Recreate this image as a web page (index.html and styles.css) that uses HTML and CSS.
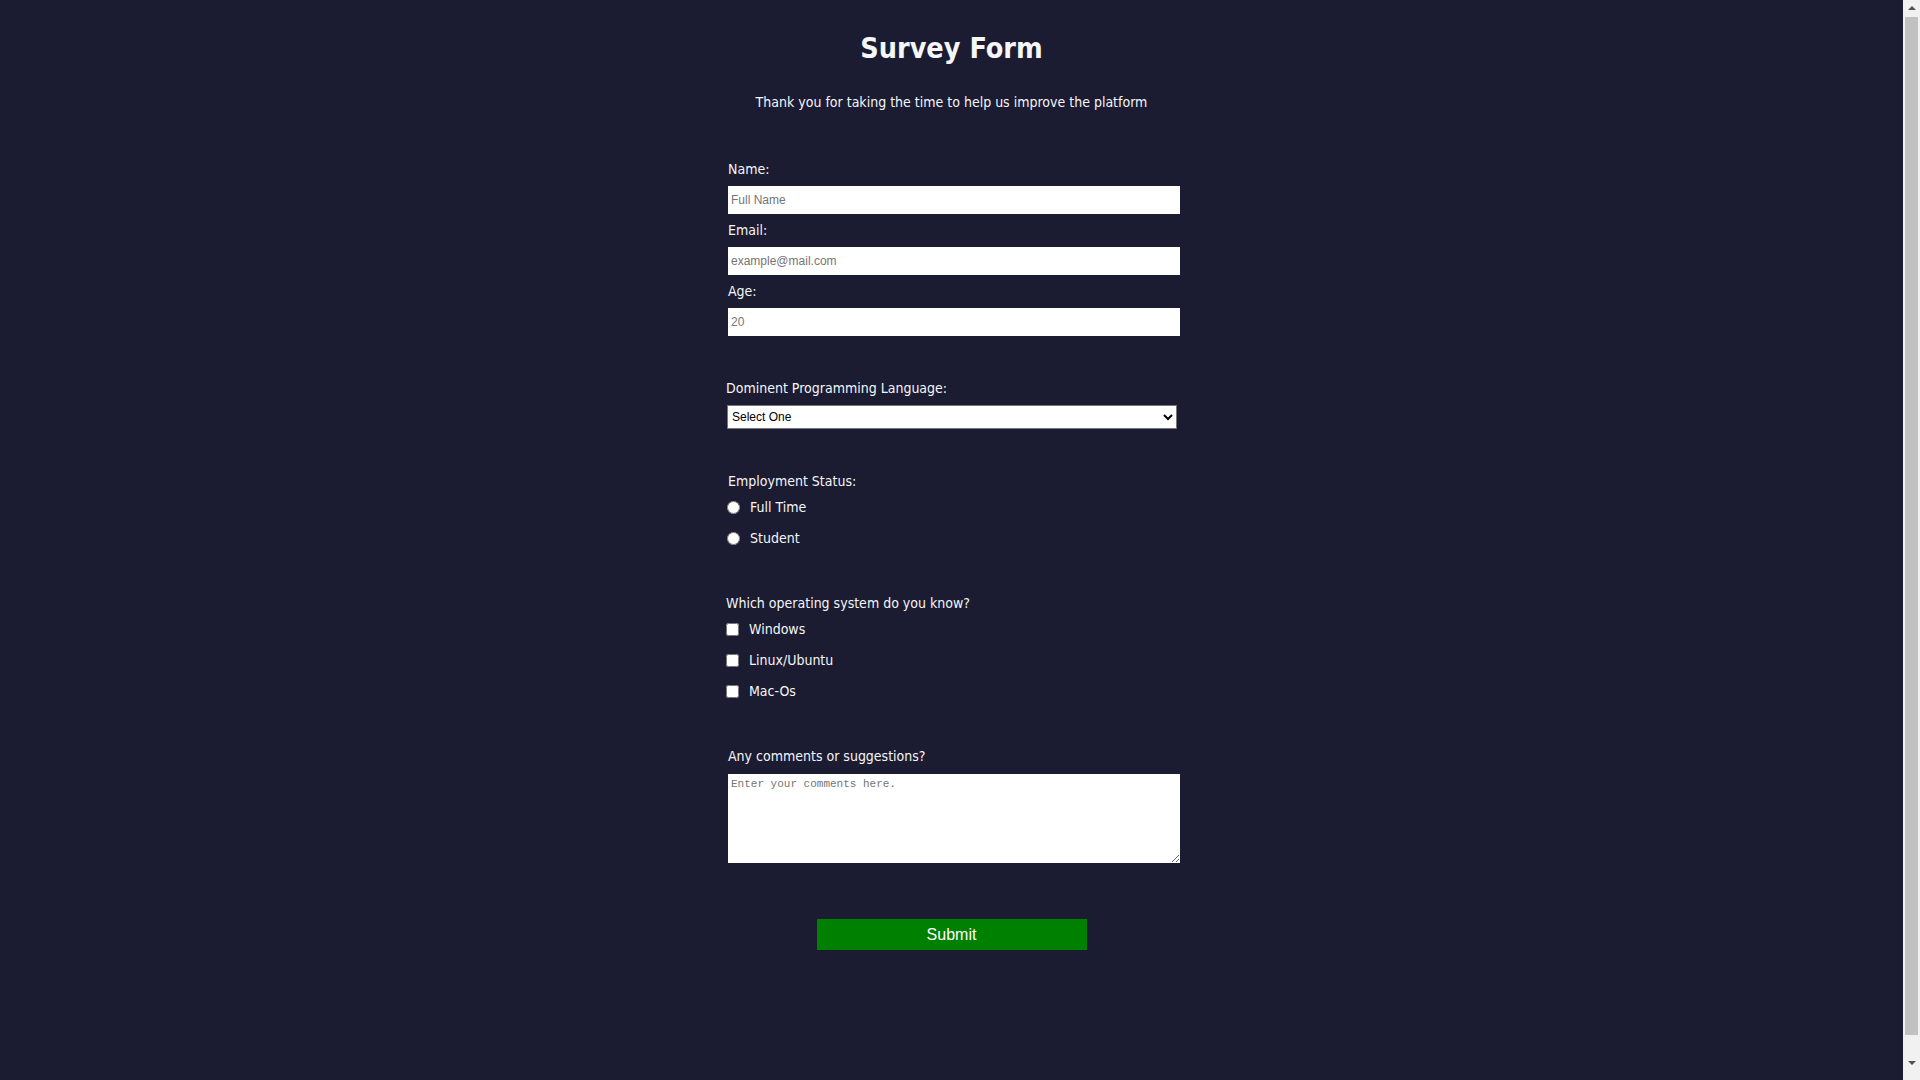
FILE: index.html
```html
<!DOCTYPE html>
<html lang="en">
<head>
<meta charset="utf-8">
<title>Survey Form</title>
<link rel="stylesheet" href="styles.css">
</head>
<body>
<div class="page">
<header class="header">
  <h1 class="title">Survey Form</h1>
  <p class="description">Thank you for taking the time to help us improve the platform</p>
</header>
<form class="survey">
  <div class="sec indent">
    <label class="lbl" for="name">Name:</label>
    <input class="field" id="name" type="text" placeholder="Full Name">
    <label class="lbl" for="email">Email:</label>
    <input class="field" id="email" type="email" placeholder="example@mail.com">
    <label class="lbl" for="age">Age:</label>
    <input class="field last" id="age" type="number" placeholder="20">
  </div>

  <div class="sec gap-lg">
    <label class="lbl" for="lang">Dominent Programming Language:</label>
    <select class="dropdown" id="lang">
      <option>Select One</option>
      <option>JavaScript</option>
      <option>Python</option>
      <option>Java</option>
    </select>
  </div>

  <div class="sec indent gap-lg">
    <p class="lbl">Employment Status:</p>
    <label class="opt radio-row"><input class="radio" type="radio" name="emp"><span>Full Time</span></label>
    <label class="opt radio-row"><input class="radio" type="radio" name="emp"><span>Student</span></label>
  </div>

  <div class="sec gap-xl">
    <p class="lbl">Which operating system do you know?</p>
    <label class="opt check-row"><input class="check" type="checkbox"><span>Windows</span></label>
    <label class="opt check-row"><input class="check" type="checkbox"><span>Linux/Ubuntu</span></label>
    <label class="opt check-row"><input class="check" type="checkbox"><span>Mac-Os</span></label>
  </div>

  <div class="sec indent gap-xl">
    <label class="lbl" for="comments">Any comments or suggestions?</label>
    <textarea class="comments" id="comments" placeholder="Enter your comments here."></textarea>
  </div>

  <div class="actions">
    <button class="submit" type="submit">Submit</button>
  </div>
</form>
</div>
<div class="scrollbar" aria-hidden="true">
  <span class="sb-arrow sb-up"></span>
  <span class="sb-thumb"></span>
  <span class="sb-arrow sb-down"></span>
</div>
</body>
</html>
```

FILE: styles.css
```css
html, body {
  margin: 0;
  padding: 0;
}

body {
  background: #1b1b32;
  color: #f5f6f7;
  font-family: "DejaVu Sans Condensed", "DejaVu Sans", sans-serif;
  font-stretch: condensed;
  font-size: 14px;
}

.page {
  width: 1903px;
}

.header {
  display: flex;
  flex-direction: column;
  align-items: center;
  padding-top: 32px;
}

.title {
  margin: 0;
  font-size: 28.5px;
  line-height: 34px;
  font-weight: bold;
}

.description {
  margin: 28px 0 0;
  line-height: 17px;
}

.survey {
  width: 451px;
  margin: 0 auto;
  padding-top: 50px;
  padding-bottom: 160px;
  display: flex;
  flex-direction: column;
}

.sec {
  display: flex;
  flex-direction: column;
  align-items: flex-start;
}

.indent {
  padding-left: 2px;
}

.gap-lg {
  margin-top: 44px;
}

.gap-xl {
  margin-top: 35px;
}

.lbl {
  display: block;
  margin: 0 0 8px;
  line-height: 17px;
}

.field {
  box-sizing: border-box;
  width: 452px;
  height: 28px;
  margin: 0 0 8px;
  padding: 0 3px;
  border: none;
  background: #fff;
  font-family: "Liberation Sans", Arial, sans-serif;
  font-size: 12px;
  color: #000;
}

.field.last {
  margin-bottom: 0;
}

.field::placeholder,
.comments::placeholder {
  color: #757575;
}

.dropdown {
  box-sizing: border-box;
  width: 450px;
  height: 24px;
  margin-left: 1px;
  border: 1px solid #767676;
  background: #fff;
  font-family: "Liberation Sans", Arial, sans-serif;
  font-size: 12px;
  color: #000;
}

.opt {
  display: flex;
  align-items: center;
  height: 17px;
  line-height: 17px;
  margin-top: 1px;
  margin-bottom: 13px;
}

.radio-row .radio {
  margin: 0 10px 0 -1px;
  width: 13px;
  height: 13px;
}

.check-row .check {
  margin: 0 10px 0 0;
  width: 13px;
  height: 13px;
}

.comments {
  box-sizing: border-box;
  display: block;
  width: 452px;
  height: 89px;
  margin: 1px 0 0;
  padding: 4px 3px 2px;
  border: none;
  background: #fff;
  font-family: "Liberation Mono", "Courier New", monospace;
  font-size: 11px;
  resize: vertical;
}

.actions {
  display: flex;
  justify-content: center;
  margin-top: 56px;
}

.submit {
  width: 270px;
  height: 31px;
  border: none;
  background: #008000;
  color: #fff;
  font-family: "Liberation Sans", Arial, sans-serif;
  font-size: 16px;
  cursor: pointer;
}

/* imitation of the browser's vertical scrollbar */
.scrollbar {
  position: fixed;
  top: 0;
  right: 0;
  width: 17px;
  height: 100vh;
  background: #f1f1f1;
  display: flex;
  flex-direction: column;
  align-items: center;
}

.sb-arrow {
  display: block;
  width: 0;
  height: 0;
  border-left: 4px solid transparent;
  border-right: 4px solid transparent;
}

.sb-up {
  margin-top: 6px;
  border-bottom: 4px solid #505050;
}

.sb-down {
  margin-top: 26px;
  border-top: 4px solid #505050;
}

.sb-thumb {
  display: block;
  width: 13px;
  height: 1018px;
  margin-top: 7px;
  background: #c1c1c1;
}
```
